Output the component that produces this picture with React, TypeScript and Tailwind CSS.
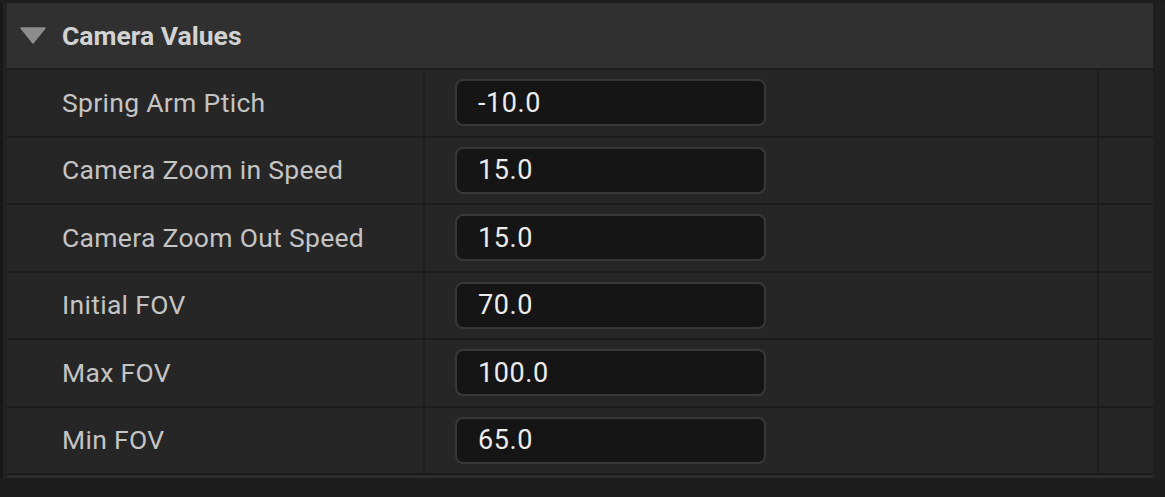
const rows = [
  { label: "Spring Arm Ptich", value: "-10.0" },
  { label: "Camera Zoom in Speed", value: "15.0" },
  { label: "Camera Zoom Out Speed", value: "15.0" },
  { label: "Initial FOV", value: "70.0" },
  { label: "Max FOV", value: "100.0" },
  { label: "Min FOV", value: "65.0" },
];

const PropertyRow = ({ label, value }: { label: string; value: string }) => {
  return (
    <div className="flex h-[67.5px] border-b-2 border-[#1b1b1b] bg-[#262626]">
      <div className="flex w-[416px] items-center pl-[55px] text-[26.5px] tracking-[0.3px] text-[#c4c4c4]">
        {label}
      </div>
      <div className="flex w-[674px] items-center border-l-2 border-[#1e1e1e] pl-[30px]">
        <div className="flex h-[47px] w-[311px] items-center rounded-[8px] border-2 border-[#383838] bg-[#151515] pl-[21px] text-[27px] tracking-[0.6px] text-[#ececec]">
          {value}
        </div>
      </div>
      <div className="flex-1 border-l-2 border-[#1e1e1e]" />
    </div>
  );
};

export default function App() {
  return (
    <div
      className="h-[497px] w-full overflow-hidden bg-[#1d1d1d] pt-[3px]"
      style={{ fontFamily: "Roboto, 'Noto Sans', sans-serif" }}
    >
      <div className="flex">
        <div className="w-[3px] bg-[#181818]" />
        <div className="w-[4px] bg-[#222222]" />
        <div className="w-[1146px]">
          <div className="flex h-[67px] items-center border-b-2 border-[#1c1c1c] bg-[#303030]">
            <svg width="26" height="17" viewBox="0 0 26 17" className="ml-[13px]">
              <path d="M1 1 L25 1 L13 16 Z" fill="#8c8c8c" strokeLinejoin="round" stroke="#8c8c8c" strokeWidth="1.5" />
            </svg>
            <span className="ml-[16px] text-[26.5px] font-bold text-[#d2d2d2]">Camera Values</span>
          </div>
          {rows.map((row) => (
            <PropertyRow key={row.label} label={row.label} value={row.value} />
          ))}
          <div className="h-[3px] bg-[#2c2c2c]" />
        </div>
        <div className="w-[12px] bg-[#1f1f1f]" />
      </div>
    </div>
  );
}
